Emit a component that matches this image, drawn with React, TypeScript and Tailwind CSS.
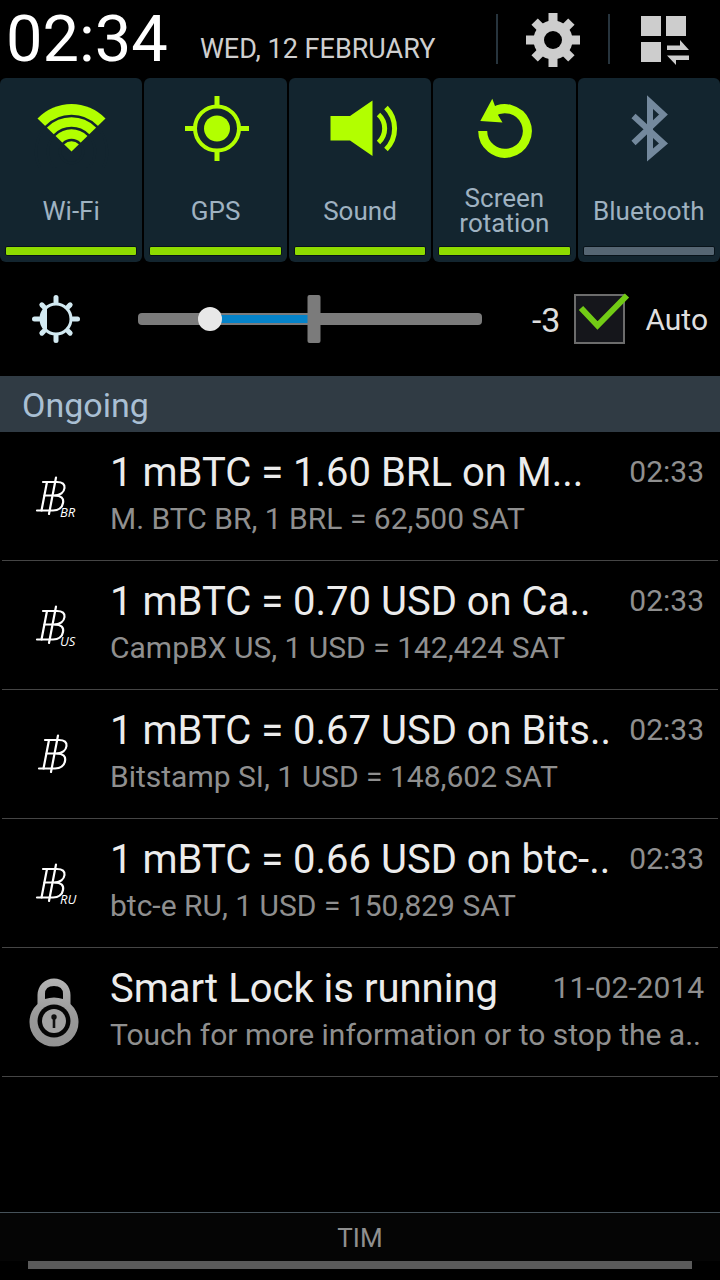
import { useState } from 'react';
import type { ReactNode } from 'react';

interface Toggle {
  id: string;
  label: string;
  icon: ReactNode;
  initial: boolean;
}

interface Notification {
  id: string;
  title: string;
  text: string;
  time: string;
  icon: ReactNode;
}

function GearIcon() {
  return (
    <svg className="w-14 h-14" viewBox="-28 -29 56 56" fill="#cdcdcd">
      {[0, 45, 90, 135].map((angle) => (
        <rect
          key={angle}
          x="-4.5"
          y={angle % 90 === 0 ? -27 : -26}
          width="9"
          height={angle % 90 === 0 ? 54 : 52}
          transform={`rotate(${angle})`}
        />
      ))}
      <circle r="19.5" />
      <circle r="9" fill="#000" />
    </svg>
  );
}

function PanelsIcon() {
  return (
    <svg className="w-[52px] h-[52px]" viewBox="1 -1 52 52" fill="#cdcdcd">
      <rect x="3" y="2" width="20" height="20" />
      <rect x="28" y="2" width="20" height="20" />
      <rect x="3" y="28" width="20" height="20" />
      <path d="M29 31.5H42V26L51 36H29Z" />
      <path d="M51 41.5H29L38 51V46H51Z" />
    </svg>
  );
}

function WifiIcon() {
  return (
    <svg className="w-20 h-20" viewBox="0 0 80 80">
      <path d="M40.5 63.5L6.5 30.5A47 47 0 0 1 74.5 30.5Z" fill="#b2ff00" />
      <g fill="none" stroke="#13252f" strokeWidth="2.6">
        <circle cx="40.5" cy="63.5" r="35.5" />
        <circle cx="40.5" cy="63.5" r="23.5" />
        <circle cx="40.5" cy="63.5" r="11.5" />
      </g>
    </svg>
  );
}

function GpsIcon() {
  return (
    <svg className="w-20 h-20" viewBox="0 0 80 80">
      <circle cx="41" cy="40.5" r="13" fill="#b2ff00" />
      <g fill="none" stroke="#b2ff00">
        <circle cx="41" cy="40.5" r="22" strokeWidth="4" />
        <path d="M41 8V18M41 63V73M9 40.5H19M63 40.5H73" strokeWidth="5" />
      </g>
    </svg>
  );
}

function SoundIcon() {
  return (
    <svg className="w-20 h-20" viewBox="0 0 80 80">
      <path d="M10.5 28H30L52.5 12.5V68L30 52.5H10.5Z" fill="#b2ff00" />
      <g fill="none" stroke="#b2ff00" strokeWidth="5">
        <path d="M58.5 26.5A19 19 0 0 1 58.5 54.5" />
        <path d="M66 19.5A30 30 0 0 1 66 61.5" />
      </g>
    </svg>
  );
}

function RotationIcon() {
  return (
    <svg className="w-20 h-20" viewBox="0 0 80 80">
      <path d="M18.7 43A22.3 22.3 0 1 0 28 24.900" fill="none" stroke="#b2ff00" strokeWidth="9" />
      <path d="M16.3 33L28.3 10.7L31 18L34 27L38.500 34.5Z" fill="#b2ff00" />
    </svg>
  );
}

function BluetoothIcon() {
  return (
    <svg className="w-20 h-20" viewBox="0 0 80 80">
      <path
        d="M24.5 28L54.500 55.5L41 67V14L54.500 26.5L24.5 55"
        fill="none"
        stroke="#74899d"
        strokeWidth="6"
      />
    </svg>
  );
}

function BrightnessIcon() {
  return (
    <svg className="w-12 h-12 shrink-0" viewBox="-24 -24 48 48">
      <g stroke="#d2e9f1" strokeWidth="5" strokeLinecap="round">
        {[0, 45, 90, 135, 180, 225, 270, 315].map((angle) => (
          <path key={angle} d={angle % 90 === 0 ? 'M0 -17V-21.5' : 'M0 -17V-20'} transform={`rotate(${angle})`} />
        ))}
      </g>
      <circle r="15" fill="#000" stroke="#d2e9f1" strokeWidth="3" />
      <path d="M-9 -13V13A16 16 0 0 1 -9 -13Z" fill="#d2e9f1" />
    </svg>
  );
}

function BitcoinIcon({ country }: { country?: string }) {
  return (
    <div className={`relative ${country ? 'pl-[34px]' : 'pl-9'}`}>
      <svg
        className="w-11 h-11"
        viewBox="0 -1 44 44"
        fill="none"
        stroke="#fff"
        strokeWidth="2.2"
        strokeLinecap="round"
      >
        <path d="M13 7L7.5 35.5M22 2.5L15 39" />
        <path d="M9 7H23C28.5 7 31 9.5 30.5 13C30 17.5 26 20.5 21 20.5H10.5" />
        <path d="M21 20.5C27 20.5 30 23.5 29 28C28.3 32.5 24.5 35.5 19 35.5H3" />
      </svg>
      {country && (
        <span className="absolute left-[60px] top-[30px] font-['Open_Sans',sans-serif] text-[13px] leading-4 italic text-white">
          {country}
        </span>
      )}
    </div>
  );
}

function LockIcon() {
  return (
    <div className="pl-7">
      <svg className="w-[52px] h-[70px]" viewBox="0 0 52 70">
        <defs>
          <linearGradient id="metal" x1="0" y1="0" x2="0" y2="1">
            <stop offset="0" stopColor="#b4b4b4" />
            <stop offset="0.55" stopColor="#999" />
            <stop offset="1" stopColor="#929292" />
          </linearGradient>
        </defs>
        <path
          fill="url(#metal)"
          fillRule="evenodd"
          d="M9.5 27V18A16.5 16.5 0 0 1 42.5 18V27A24.5 24.5 0 1 1 9.5 27ZM17 22Q26 19 35 22V17Q35 9 26 9Q17 9 17 17Z"
        />
        <circle cx="26" cy="44" r="16.5" fill="#050505" />
        <circle cx="26" cy="44" r="12" fill="#a3a3a3" />
        <circle cx="26" cy="40" r="2.7" fill="#111" />
        <path d="M24.7 40H27.3V51H24.7Z" fill="#111" />
      </svg>
    </div>
  );
}

const toggles: Toggle[] = [
  { id: 'wifi', label: 'Wi-Fi', icon: <WifiIcon />, initial: true },
  { id: 'gps', label: 'GPS', icon: <GpsIcon />, initial: true },
  { id: 'sound', label: 'Sound', icon: <SoundIcon />, initial: true },
  { id: 'rotation', label: 'Screen rotation', icon: <RotationIcon />, initial: true },
  { id: 'bluetooth', label: 'Bluetooth', icon: <BluetoothIcon />, initial: false },
];

const notifications: Notification[] = [
  {
    id: 'br',
    title: '1 mBTC = 1.60 BRL on M...',
    text: 'M. BTC BR, 1 BRL = 62,500 SAT',
    time: '02:33',
    icon: <BitcoinIcon country="BR" />,
  },
  {
    id: 'us',
    title: '1 mBTC = 0.70 USD on Ca..',
    text: 'CampBX US, 1 USD = 142,424 SAT',
    time: '02:33',
    icon: <BitcoinIcon country="US" />,
  },
  {
    id: 'si',
    title: '1 mBTC = 0.67 USD on Bits..',
    text: 'Bitstamp SI, 1 USD = 148,602 SAT',
    time: '02:33',
    icon: <BitcoinIcon />,
  },
  {
    id: 'ru',
    title: '1 mBTC = 0.66 USD on btc-..',
    text: 'btc-e RU, 1 USD = 150,829 SAT',
    time: '02:33',
    icon: <BitcoinIcon country="RU" />,
  },
  {
    id: 'lock',
    title: 'Smart Lock is running',
    text: 'Touch for more information or to stop the a..',
    time: '11-02-2014',
    icon: <LockIcon />,
  },
];

function StatusHeader() {
  return (
    <header className="flex h-[78px] items-center">
      <time className="pl-1.5 text-[65px] leading-[76px] text-white">02:34</time>
      <p className="flex-1 whitespace-nowrap pl-8 pt-5 text-[27px] leading-8 text-[#cfcfcf]">WED, 12 FEBRUARY</p>
      <button type="button" aria-label="Settings" className="flex h-[50px] w-28 items-center justify-center border-l-2 border-[#27343d]">
        <GearIcon />
      </button>
      <button type="button" aria-label="Quick panels" className="flex h-[50px] w-28 items-center justify-center border-l-2 border-[#27343d]">
        <PanelsIcon />
      </button>
    </header>
  );
}

function QuickToggle({ toggle }: { toggle: Toggle }) {
  const [on, setOn] = useState(toggle.initial);

  return (
    <button
      type="button"
      aria-pressed={on}
      onClick={() => setOn(!on)}
      className="flex h-[184px] flex-col items-center rounded-md bg-[#13252f] px-[5px] pb-1.5 pt-2.5"
    >
      {toggle.icon}
      <span className="flex flex-1 items-center justify-center pt-2 text-[26px] leading-[25px] text-[#9fb2c1]">
        {toggle.label}
      </span>
      <span className={`h-2.5 w-full rounded-xs border border-[#08131a] ${on ? 'bg-[#8edb00]' : 'bg-[#566673]'}`} />
    </button>
  );
}

function BrightnessRow() {
  const [level, setLevel] = useState(-3);
  const [auto, setAuto] = useState(true);
  const percent = 51 + level * 10;

  return (
    <section className="flex h-[114px] items-center pl-8 pr-3">
      <BrightnessIcon />
      <div className="relative ml-[58px] h-12 min-w-0 flex-1">
        <div className="absolute inset-x-0 top-[18px] h-3 rounded-sm bg-[#7b7b7b]" />
        <div
          className="absolute top-5 h-2 bg-[#0583c9]"
          style={{ left: `${Math.min(percent, 51)}%`, right: `${100 - Math.max(percent, 51)}%` }}
        />
        <div className="absolute left-[51%] top-0 h-12 w-[13px] -translate-x-1/2 rounded-xs bg-[#7b7b7b]" />
        <input
          type="range"
          aria-label="Brightness"
          min={-5}
          max={5}
          value={level}
          onChange={(e) => setLevel(Number(e.target.value))}
          className="absolute -left-2 -right-3 top-0 h-12 w-[calc(100%+20px)] appearance-none bg-transparent [&::-webkit-slider-thumb]:h-6 [&::-webkit-slider-thumb]:w-6 [&::-webkit-slider-thumb]:appearance-none [&::-webkit-slider-thumb]:rounded-full [&::-webkit-slider-thumb]:bg-[#e8e8e8]"
        />
      </div>
      <span className="w-[78px] pt-0.5 text-right text-[34px] leading-10 text-[#dedede]">{level}</span>
      <label className="flex items-center pl-3.5">
        <span className="relative h-[50px] w-[51px]">
          <input
            type="checkbox"
            checked={auto}
            onChange={(e) => setAuto(e.target.checked)}
            className="block h-full w-full appearance-none border-2 border-[#6c6c6c] bg-[#15161b]"
          />
          {auto && (
            <svg className="pointer-events-none absolute inset-0 h-full w-full overflow-visible" viewBox="0 0 51 50">
              <path d="M7 14L23.5 31.5L53 1.5" fill="none" stroke="#72cb15" strokeWidth="6" />
            </svg>
          )}
        </span>
        <span className="pl-5 pt-0.5 text-[30px] leading-9 text-[#dedede]">Auto</span>
      </label>
    </section>
  );
}

function NotificationRow({ item }: { item: Notification }) {
  return (
    <li className="mx-0.5 flex h-[129px] items-start border-b border-[#454545]">
      <div className="-ml-0.5 flex h-full w-[110px] shrink-0 items-center">{item.icon}</div>
      <div className="min-w-0 flex-1 pr-3.5 pt-[15px]">
        <div className="flex justify-between">
          <h3 className="whitespace-nowrap pt-px text-[40px] leading-[50px] text-[#ececec]">{item.title}</h3>
          <time className="whitespace-nowrap text-[30px] leading-[50px] text-[#8f8f8f]">{item.time}</time>
        </div>
        <p className="whitespace-nowrap text-[30px] leading-[42px] text-[#8f8f8f]">{item.text}</p>
      </div>
    </li>
  );
}

export default function App() {
  return (
    <div className="flex min-h-screen flex-col bg-black font-[Roboto,sans-serif]">
      <StatusHeader />
      <div className="grid grid-cols-5 gap-0.5">
        {toggles.map((toggle) => (
          <QuickToggle key={toggle.id} toggle={toggle} />
        ))}
      </div>
      <BrightnessRow />
      <h2 className="bg-[#303b44] pl-[22px] pt-0.5 text-[34px] leading-[54px] text-[#a9bfd3]">Ongoing</h2>
      <ul className="flex-1">
        {notifications.map((item) => (
          <NotificationRow key={item.id} item={item} />
        ))}
      </ul>
      <footer className="border-t border-[#46525a] bg-[#050505]">
        <p className="pt-0.5 text-center text-[26px] leading-[46px] text-[#8f8f8f]">TIM</p>
        <div className="bg-black px-7 pb-[11px]">
          <div className="h-2 bg-[#5a5a5a]" />
        </div>
      </footer>
    </div>
  );
}
